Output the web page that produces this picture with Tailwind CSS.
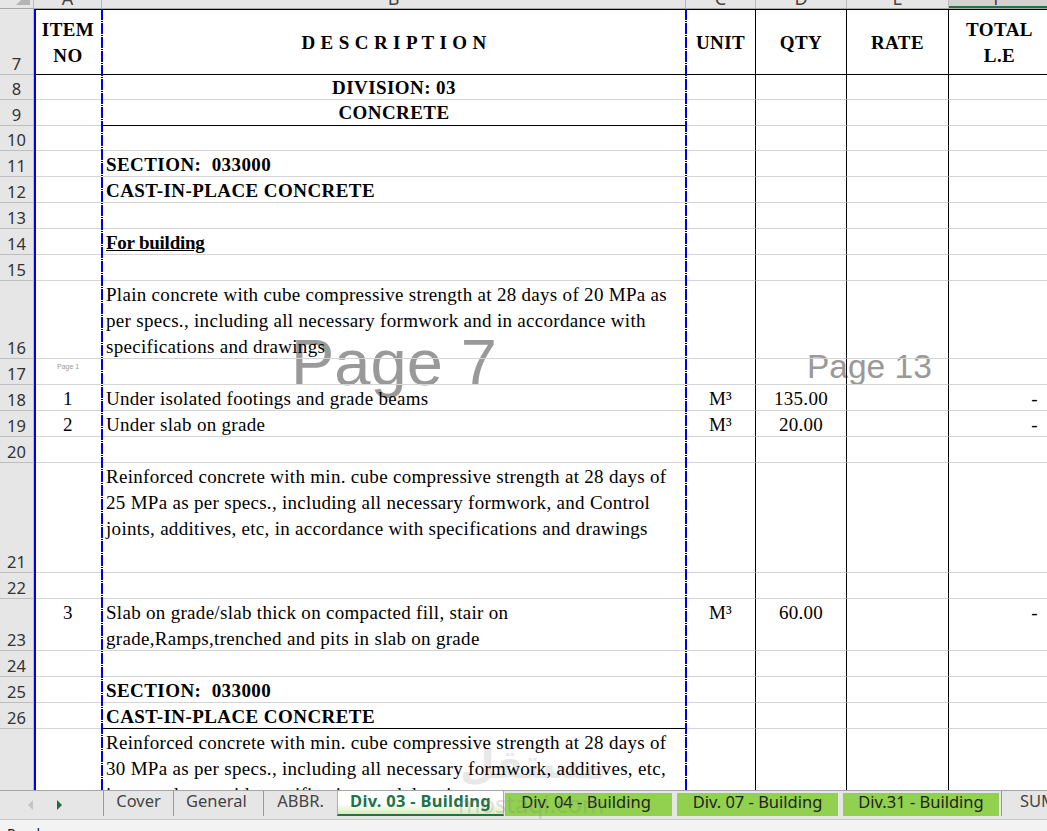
<!DOCTYPE html>
<html>
<head>
<meta charset="utf-8">
<script src="https://cdn.jsdelivr.net/npm/@tailwindcss/browser@4"></script>
</head>
<body class="bg-white">
<div class="relative w-[1047px] h-[831px] overflow-hidden bg-white flex flex-col font-['Liberation_Serif',serif] text-[19px] tracking-[0.3px] text-black">

  <!-- column letters -->
  <div class="h-[9px] shrink-0 flex bg-[#e6e6e6] border-b border-[#a8a8a8] overflow-hidden font-['Noto_Sans',sans-serif] text-[18px] tracking-normal text-[#444] leading-[18px]">
    <div class="w-[34px] relative border-r border-[#bbb]"><div class="absolute right-[3px] -top-[9px] w-0 h-0 border-l-[14px] border-l-transparent border-b-[14px] border-b-[#b5b5b5]"></div></div>
    <div class="w-[68px] border-r border-[#bbb] text-center -mt-[11px]">A</div>
    <div class="w-[584px] border-r border-[#bbb] text-center -mt-[11px]">B</div>
    <div class="w-[70px] border-r border-[#bbb] text-center -mt-[11px]">C</div>
    <div class="w-[91px] border-r border-[#bbb] text-center -mt-[11px]">D</div>
    <div class="w-[102px] border-r border-[#bbb] text-center -mt-[11px]">E</div>
    <div class="w-[98px] bg-[#d2d2d2] border-b-2 border-[#217346] text-center -mt-[11px]">F</div>
  </div>

  <!-- sheet -->
  <div class="relative flex-1 min-h-0 overflow-hidden">

    <!-- page watermarks, behind the cells -->
    <div class="absolute inset-0 whitespace-nowrap tracking-normal font-['Liberation_Sans',sans-serif]">
      <span class="absolute left-[291px] top-[314px] text-[65px] leading-[80px] text-[#999]">Page 7</span>
      <span class="absolute left-[807px] top-[338px] text-[33.5px] leading-[40px] text-[#999]">Page 13</span>
      <span class="absolute left-[57px] top-[353px] text-[7px] leading-[10px] text-[#999]">Page 1</span>
      <span class="absolute left-[460px] top-[730px] font-['DejaVu_Sans',sans-serif] text-[40px] leading-[50px] font-bold text-[#e8e8e8]">مستقل</span>
    </div>

    <div class="relative [&>div]:grid [&>div]:grid-cols-[34px_68px_584px_70px_91px_102px_98px] [&>div]:grid-rows-[minmax(0,1fr)] [&>div>div]:border-b [&>div>div]:border-[#d4d4d4] [&>div:nth-child(n+5)>div:not(:first-child)]:pt-[1px] [&>div>div:nth-child(4)]:border-r [&>div>div:nth-child(4)]:border-r-black [&>div>div:nth-child(5)]:border-r [&>div>div:nth-child(5)]:border-r-black [&>div>div:nth-child(6)]:border-r [&>div>div:nth-child(6)]:border-r-black [&>div>div:first-child]:bg-[#e6e6e6] [&>div>div:first-child]:border-[#bdbdbd] [&>div>div:first-child]:border-r [&>div>div:first-child]:font-['Noto_Sans',sans-serif] [&>div>div:first-child]:font-normal [&>div>div:first-child]:tracking-normal [&>div>div:first-child]:text-[16.5px] [&>div>div:first-child]:text-[#333] [&>div>div:first-child]:text-center [&>div>div:first-child]:leading-[20px] [&>div>div:first-child]:flex [&>div>div:first-child]:items-end [&>div>div:first-child]:justify-center">

      <div class="h-[66px] font-bold leading-[26px] tracking-[0.4px]">
        <div>7</div>
        <div class="pt-[1px] border-t border-t-black! border-b-black! text-center flex items-center justify-center">ITEM<br>NO</div>
        <div class="pt-[1px] border-t border-t-black! border-b-black! flex items-center justify-center tracking-[0.35px]">D E S C R I P T I O N</div>
        <div class="pt-[1px] border-t border-t-black! border-b-black! flex items-center justify-center">UNIT</div>
        <div class="pt-[1px] border-t border-t-black! border-b-black! flex items-center justify-center">QTY</div>
        <div class="pt-[1px] border-t border-t-black! border-b-black! flex items-center justify-center">RATE</div>
        <div class="pt-[1px] pl-[3px] border-t border-t-black! border-b-black! text-center flex items-center justify-center">TOTAL<br>L.E</div>
      </div>

      <div class="h-[25px] leading-[26px] font-bold tracking-[0.43px]"><div>8</div><div></div><div class="text-center">DIVISION: 03</div><div></div><div></div><div></div><div></div></div>
      <div class="h-[26px] leading-[26px] font-bold tracking-[0.43px]"><div>9</div><div></div><div class="text-center border-b-black!">CONCRETE</div><div></div><div></div><div></div><div></div></div>
      <div class="h-[25px]"><div>10</div><div></div><div></div><div></div><div></div><div></div><div></div></div>
      <div class="h-[26px] leading-[26px] font-bold tracking-[0.43px]"><div>11</div><div></div><div class="pl-[4px] whitespace-pre">SECTION:  033000</div><div></div><div></div><div></div><div></div></div>
      <div class="h-[26px] leading-[26px] font-bold tracking-[0.43px]"><div>12</div><div></div><div class="pl-[4px]">CAST-IN-PLACE CONCRETE</div><div></div><div></div><div></div><div></div></div>
      <div class="h-[26px]"><div>13</div><div></div><div></div><div></div><div></div><div></div><div></div></div>
      <div class="h-[26px] leading-[26px] font-bold tracking-[-0.25px]"><div>14</div><div></div><div class="pl-[4px] underline">For building</div><div></div><div></div><div></div><div></div></div>
      <div class="h-[26px]"><div>15</div><div></div><div></div><div></div><div></div><div></div><div></div></div>
      <div class="h-[78px] leading-[26px]"><div>16</div><div></div><div class="pl-[4px]">Plain concrete with cube compressive strength at 28 days of 20 MPa as<br>per specs., including all necessary formwork and in accordance with<br>specifications and drawings</div><div></div><div></div><div></div><div></div></div>
      <div class="h-[26px]"><div>17</div><div></div><div></div><div></div><div></div><div></div><div></div></div>
      <div class="h-[26px] leading-[26px]"><div>18</div><div class="text-center">1</div><div class="pl-[4px]">Under isolated footings and grade beams</div><div class="text-center">M³</div><div class="text-center">135.00</div><div></div><div class="text-right pr-[9px]">-</div></div>
      <div class="h-[26px] leading-[26px]"><div>19</div><div class="text-center">2</div><div class="pl-[4px]">Under slab on grade</div><div class="text-center">M³</div><div class="text-center">20.00</div><div></div><div class="text-right pr-[9px]">-</div></div>
      <div class="h-[26px]"><div>20</div><div></div><div></div><div></div><div></div><div></div><div></div></div>
      <div class="h-[110px] leading-[26px]"><div>21</div><div></div><div class="pl-[4px]">Reinforced concrete with min. cube compressive strength at 28 days of<br>25 MPa as per specs., including all necessary formwork, and Control<br>joints, additives, etc, in accordance with specifications and drawings</div><div></div><div></div><div></div><div></div></div>
      <div class="h-[26px]"><div>22</div><div></div><div></div><div></div><div></div><div></div><div></div></div>
      <div class="h-[52px] leading-[26px]"><div>23</div><div class="text-center">3</div><div class="pl-[4px]">Slab on grade/slab thick on compacted fill, stair on<br>grade,Ramps,trenched and pits in slab on grade</div><div class="text-center">M³</div><div class="text-center">60.00</div><div></div><div class="text-right pr-[9px]">-</div></div>
      <div class="h-[26px]"><div>24</div><div></div><div></div><div></div><div></div><div></div><div></div></div>
      <div class="h-[26px] leading-[26px] font-bold tracking-[0.43px]"><div>25</div><div></div><div class="pl-[4px] whitespace-pre">SECTION:  033000</div><div></div><div></div><div></div><div></div></div>
      <div class="h-[26px] leading-[26px] font-bold tracking-[0.43px]"><div>26</div><div></div><div class="pl-[4px] border-b-black!">CAST-IN-PLACE CONCRETE</div><div></div><div></div><div></div><div></div></div>
      <div class="h-[104px] leading-[26px]"><div></div><div></div><div class="pl-[4px]">Reinforced concrete with min. cube compressive strength at 28 days of<br>30 MPa as per specs., including all necessary formwork, additives, etc,<br>in accordance with specifications and drawings</div><div></div><div></div><div></div><div></div></div>
    </div>

    <!-- page break lines -->
    <div class="absolute left-[34px] top-0 bottom-0 w-[2px] bg-[#0000e6]"></div>
    <div class="absolute left-[101px] top-0 bottom-0 w-[2px] bg-[repeating-linear-gradient(to_bottom,#0000e6_0,#0000e6_11px,white_11px,white_12px,black_12px,black_13px,white_13px,white_14px)]"></div>
    <div class="absolute left-[685px] top-0 bottom-0 w-[2px] bg-[repeating-linear-gradient(to_bottom,#0000e6_0,#0000e6_11px,white_11px,white_12px,black_12px,black_13px,white_13px,white_14px)]"></div>
  </div>

  <!-- sheet tabs -->
  <div class="h-[30px] shrink-0 flex items-start bg-[#e6e6e6] border-t border-[#a6a6a6] border-b border-b-[#c8c8c8] font-['Noto_Sans',sans-serif] text-[16.5px] tracking-normal text-[#444] leading-[20px] overflow-hidden whitespace-nowrap">
    <div class="w-[103px] shrink-0 h-[26px] flex items-center">
      <svg width="80" height="24" viewBox="0 0 80 24"><path d="M33 8l-5 5 5 5z" fill="#c4c4c4"/><path d="M57 8l5 5-5 5z" fill="#1f6b45"/></svg>
    </div>
    <div class="w-[70px] h-[25px] shrink-0 text-center border-l border-[#9a9a9a]">Cover</div>
    <div class="w-[90px] h-[25px] shrink-0 pl-[12px] border-l border-[#9a9a9a]">General</div>
    <div class="w-[74px] h-[25px] shrink-0 text-center border-l border-[#9a9a9a]">ABBR.</div>
    <div class="w-[167px] h-[25px] shrink-0 text-center font-bold text-[#217346] tracking-[0.3px] bg-[linear-gradient(to_bottom,white_55%,#d6edbc)] border-x border-b-2 border-[#217346] border-x-[#a0b89a]">Div. 03 - Building</div>
    <div class="w-[167px] h-[23px] mt-[2px] ml-[1px] pr-[5px] shrink-0 text-center text-[#222] leading-[17px] bg-[#92d050]">Div. 04 - Building</div>
    <div class="w-[161px] h-[23px] mt-[2px] ml-[5px] shrink-0 text-center text-[#222] leading-[17px] bg-[#92d050]">Div. 07 - Building</div>
    <div class="w-[156px] h-[23px] mt-[2px] ml-[5px] shrink-0 text-center text-[#222] leading-[17px] bg-[#92d050]">Div.31 - Building</div>
    <div class="h-[25px] ml-[2px] shrink-0 pl-[18px] border-l border-[#9a9a9a]">SUM</div>
  </div>

  <!-- status bar -->
  <div class="h-[11px] shrink-0 bg-[#f3f3f3] overflow-hidden font-['Noto_Sans',sans-serif] text-[14px] tracking-normal text-[#222] pl-[7px] leading-[20px] pt-[4px]">Ready</div>

  <!-- faint site mark over the tabs -->
  <span class="absolute left-[458px] top-[791px] font-['Noto_Sans',sans-serif] text-[24px] leading-[26px] tracking-normal text-[#808080]/25 whitespace-nowrap">mostaql.com</span>
</div>
</body>
</html>
